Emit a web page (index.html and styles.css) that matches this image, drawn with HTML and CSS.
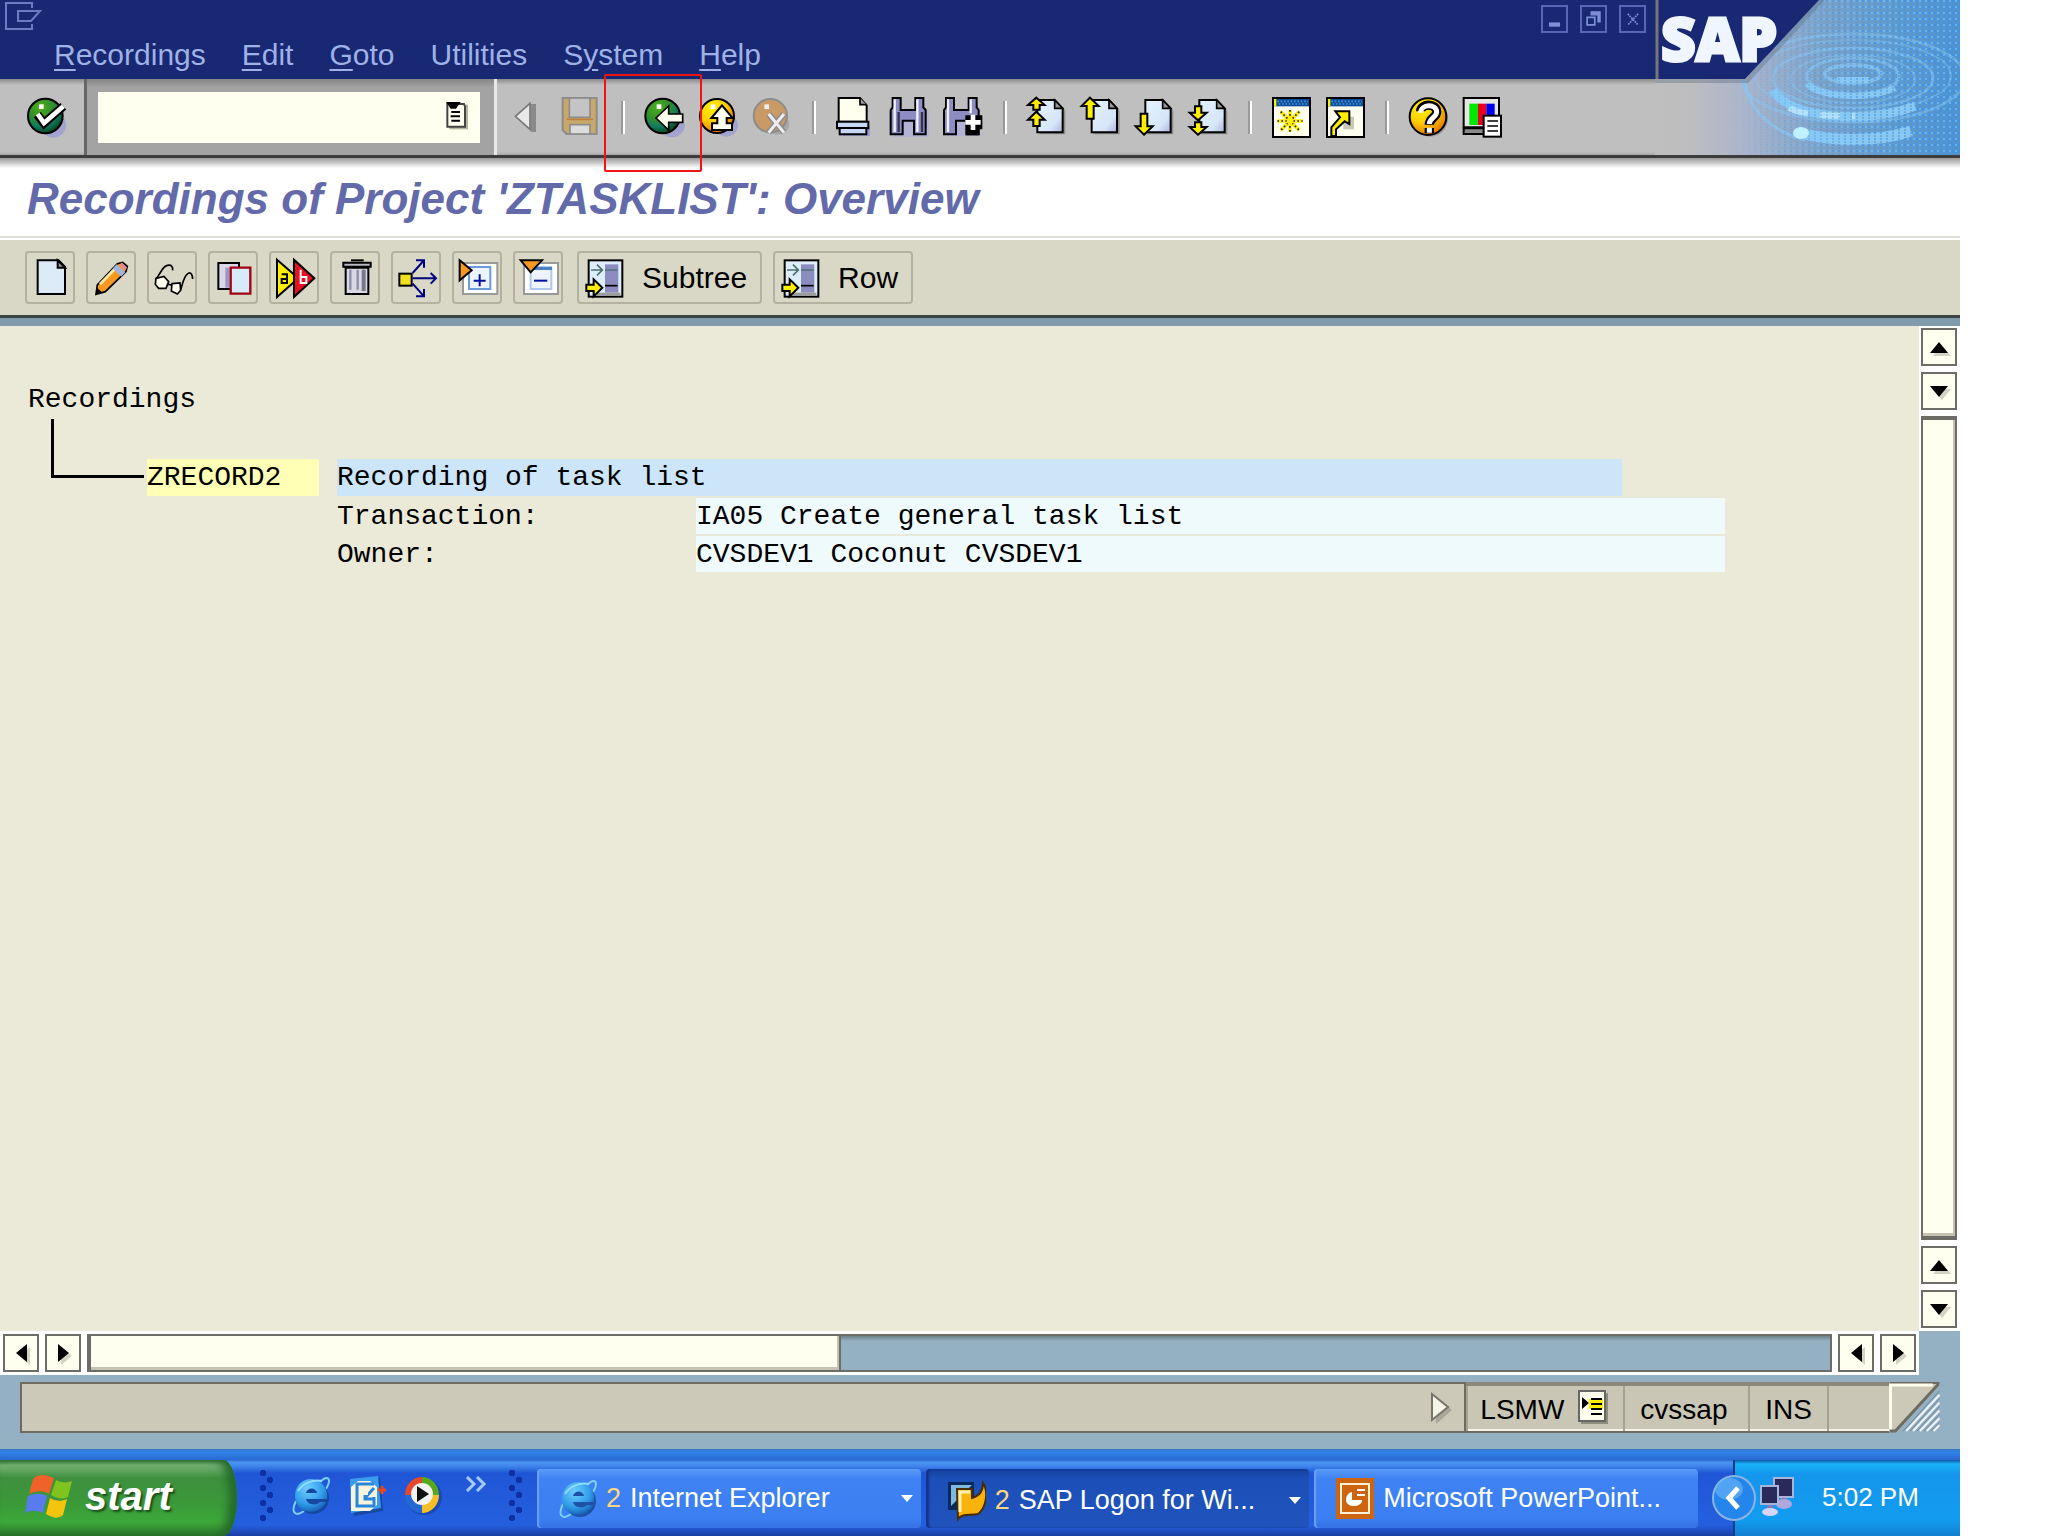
FILE: index.html
```
<!DOCTYPE html>
<html lang="en">
<head>
    <meta charset="UTF-8">
    <meta name="viewport" content="width=device-width, initial-scale=1.0">
    <title>Recordings of Project 'ZTASKLIST': Overview</title>
    <link rel="stylesheet" href="styles.css">
</head>
<body>
    <!-- shared gradients and shapes -->
    <svg class="defs" aria-hidden="true">
        <defs>
            <radialGradient id="green" cx="0.35" cy="0.25" r="0.8">
                <stop offset="0" stop-color="#4fae1c"/>
                <stop offset="0.45" stop-color="#2f8f2a"/>
                <stop offset="0.7" stop-color="#117a63"/>
                <stop offset="1" stop-color="#063f10"/>
            </radialGradient>
            <radialGradient id="gold" cx="0.35" cy="0.25" r="0.8">
                <stop offset="0" stop-color="#fff200"/>
                <stop offset="0.5" stop-color="#ffd000"/>
                <stop offset="1" stop-color="#e07000"/>
            </radialGradient>
            <linearGradient id="glass" x2="1" y2="1">
                <stop offset="0" stop-color="#e3f3ff"/>
                <stop offset="0.7" stop-color="#d6e6f8"/>
                <stop offset="1" stop-color="#aeb2dc"/>
            </linearGradient>
            <radialGradient id="ieblue" cx="0.4" cy="0.3" r="0.8">
                <stop offset="0" stop-color="#6fd0ff"/>
                <stop offset="0.6" stop-color="#2f9ae8"/>
                <stop offset="1" stop-color="#0f4fa8"/>
            </radialGradient>
            <g id="page">
                <path d="M6 306H56L84 332V403H6Z" fill="#8f8f8f"/>
                <path d="M0 300H52L76 325V397H0Z" fill="url(#glass)" stroke="#000" stroke-width="6"/>
                <path d="M52 300V325H76Z" fill="#9a9a9a" stroke="#000" stroke-width="5"/>
            </g>
            <g id="window">
                <rect x="3" y="294" width="111" height="117" fill="#fffff0" stroke="#000" stroke-width="6"/>
                <rect x="6" y="297" width="105" height="22" fill="#0a4f9c"/>
                <rect x="6" y="297" width="7" height="22" fill="#f4f000"/>
                <path d="M16 304H108M20 312H108" stroke="#4f8fd0" stroke-width="5" stroke-dasharray="5 5"/>
            </g>
            <g id="ie">
                <path d="M28 7C36 -1 40 4 34 14" fill="none" stroke="#7ccff8" stroke-width="2"/>
                <path d="M4 26C-2 38 4 42 12 36" fill="none" stroke="#7ccff8" stroke-width="2"/>
                <circle cx="21" cy="23" r="16" fill="#123f86" opacity="0.7"/>
                <path d="M19 4A16 17 0 0 1 35 24H14C15 30 25 31 28 27H34C29 41 3 41 3 21C3 11 10 4 19 4ZM14 18H25C24 12 15 12 14 18Z" fill="url(#ieblue)" fill-rule="evenodd"/>
                <path d="M6 16C10 9 20 4 30 6" fill="none" stroke="#8fdcff" stroke-width="2"/>
            </g>
            <g id="layout">
                <rect x="35" y="25" width="101" height="109" fill="#ddeefa" stroke="#000" stroke-width="6"/>
                <rect x="84" y="37" width="40" height="85" fill="#8d8cc0"/>
                <path d="M84 101H122" stroke="#000" stroke-width="5"/>
                <path d="M84 54H122M42 54H76M60 38L76 54L60 70" stroke="#4d7070" stroke-width="5" fill="none"/>
                <path d="M60 122H130V131H60Z" fill="#9c9c9c"/>
                <path d="M28 98H50V82L76 107L50 133V117H28Z" fill="#ffee00" stroke="#000" stroke-width="6"/>
            </g>
        </defs>
    </svg>

    <div class="window">
        <header class="header">
            <div class="header-main">
                <div class="titlebar">
                    <div class="caption">
                        <svg class="sysmenu" viewBox="0 0 40 32"><path d="M27 8V3H1V29H27V24M13 11H35L26 21H13Z" fill="none" stroke="#6b7cc4" stroke-width="2"/></svg>
                        <div class="controls">
                            <button class="ctl" aria-label="Minimize"><svg viewBox="0 0 27 28"><rect x="7" y="18" width="13" height="5" fill="#7d8fd6"/></svg></button>
                            <button class="ctl" aria-label="Restore"><svg viewBox="0 0 27 28"><path d="M10 5H22V18H18V10H10Z" fill="#7d8fd6"/><path d="M6 12H15V21H6Z" fill="none" stroke="#7d8fd6" stroke-width="2"/></svg></button>
                            <button class="ctl" aria-label="Close"><svg viewBox="0 0 27 28"><path d="M8 8L20 21M20 8L8 21" stroke="#7d8fd6" stroke-width="2" stroke-dasharray="2 1"/></svg></button>
                        </div>
                    </div>
                    <nav class="menu">
                        <button><u>R</u>ecordings</button>
                        <button><u>E</u>dit</button>
                        <button><u>G</u>oto</button>
                        <button>Utilities</button>
                        <button>S<u>y</u>stem</button>
                        <button><u>H</u>elp</button>
                    </nav>
                </div>
                <div class="toolbar">
                    <button class="enter" aria-label="Enter">
                        <svg viewBox="75 279 132 144">
                            <ellipse cx="160" cy="375" rx="38" ry="38" fill="#a3a3cf"/>
                            <circle cx="136" cy="348" r="52" fill="url(#green)" stroke="#000" stroke-width="6"/>
                            <rect x="117" y="313" width="14" height="14" fill="#fff"/>
                            <path d="M112 344L132 370L190 319" fill="none" stroke="#000" stroke-width="26"/>
                            <path d="M113 342L132 369L190 319" fill="none" stroke="#fff" stroke-width="14"/>
                        </svg>
                    </button>
                    <div class="command">
                        <input type="text" aria-label="Command field">
                        <button class="history" aria-label="Command history">
                            <svg viewBox="0 0 66 84">
                                <path d="M10 8H66V82H10Z" fill="#b5b5a0"/>
                                <path d="M4 6H54L57 14V74H4Z" fill="#fffff0" stroke="#444" stroke-width="6"/>
                                <path d="M0 0H44L30 20H14Z" fill="#000"/>
                                <path d="M16 30H42M14 43H42M16 56H42" stroke="#000" stroke-width="6"/>
                            </svg>
                        </button>
                    </div>
                    <div class="tools">
                        <button aria-label="Collapse"><svg viewBox="0 279 162 144">
                            <path d="M92 312V396H108V312Z" fill="#8a8a8a"/>
                            <path d="M46 349L90 310V388Z" fill="#e8e8e8" stroke="#777" stroke-width="5"/>
                        </svg></button>
                        <button aria-label="Save"><svg viewBox="162 279 162 144">
                            <path d="M188 294H290V402H200L188 390Z" fill="#c9a86a" stroke="#8c8c8c" stroke-width="6"/>
                            <rect x="208" y="294" width="62" height="58" fill="#c4c4c4" stroke="#8c8c8c" stroke-width="5"/>
                            <rect x="210" y="374" width="60" height="28" fill="#dcdcdc" stroke="#8c8c8c" stroke-width="5"/>
                            <path d="M200 358H280" stroke="#c08040" stroke-width="5"/>
                        </svg></button>
                        <span class="sep"></span>
                        <button aria-label="Back"><svg viewBox="411 279 162 144">
                            <ellipse cx="516" cy="376" rx="38" ry="36" fill="#a3a3cf"/>
                            <circle cx="488" cy="348" r="52" fill="url(#green)" stroke="#000" stroke-width="6"/>
                            <rect x="470" y="313" width="14" height="14" fill="#fff"/>
                            <path d="M468 354L506 318V342H548V367H506V390Z" fill="#fffff0" stroke="#000" stroke-width="5"/>
                        </svg></button>
                        <button aria-label="Exit"><svg viewBox="573 279 162 144">
                            <ellipse cx="678" cy="376" rx="36" ry="34" fill="#a3a3cf"/>
                            <circle cx="651" cy="348" r="51" fill="url(#gold)" stroke="#000" stroke-width="6"/>
                            <rect x="632" y="313" width="14" height="14" fill="#fff"/>
                            <path d="M666 316L698 354H680V370H696V390H636V370H652V354H634Z" fill="#fffff0" stroke="#000" stroke-width="6"/>
                        </svg></button>
                        <button aria-label="Cancel"><svg viewBox="735 279 162 144">
                            <ellipse cx="832" cy="372" rx="36" ry="32" fill="#a9a9a9"/>
                            <circle cx="811" cy="347" r="50" fill="#c99966" stroke="#8c8c8c" stroke-width="6"/>
                            <rect x="793" y="313" width="14" height="14" fill="#eee"/>
                            <path d="M806 342L852 398M852 342L806 398" stroke="#8c8c8c" stroke-width="18"/>
                            <path d="M806 342L852 398M852 342L806 398" stroke="#eee" stroke-width="9"/>
                        </svg></button>
                        <span class="sep"></span>
                        <button aria-label="Print"><svg viewBox="984 279 162 144">
                            <path d="M1018 380H1110V408H1018Z" fill="#9a9ad0"/>
                            <path d="M1016 294H1080L1100 316V365H1016Z" fill="#fffff0" stroke="#000" stroke-width="6"/>
                            <path d="M1080 294V314H1100" fill="#999" stroke="#000" stroke-width="5"/>
                            <path d="M1011 365H1105V385H1099V403H1019V385H1011Z" fill="#c8d8f4" stroke="#000" stroke-width="6"/>
                            <path d="M1014 384H1102" stroke="#000" stroke-width="6"/>
                        </svg></button>
                        <button aria-label="Find"><svg viewBox="1146 279 162 144">
                            <path d="M1180 330H1286V411H1180Z" fill="#b3b3d6"/>
                            <path d="M1178 294H1202V330H1246V294H1270V322L1277 330V403H1242V362H1208V403H1172V330L1178 322Z" fill="#8d8dc4" stroke="#000" stroke-width="6"/>
                            <path d="M1184 298V396M1252 298V396" stroke="#f2f2ff" stroke-width="7"/>
                            <path d="M1196 336V396M1266 336V396" stroke="#33334f" stroke-width="7"/>
                        </svg></button>
                        <button aria-label="Find next"><svg viewBox="1308 279 162 144">
                            <path d="M1340 330H1440V408H1340Z" fill="#b3b3d6"/>
                            <path d="M1338 294H1362V330H1406V294H1430V322L1436 330V403H1402V362H1368V403H1332V330L1338 322Z" fill="#8d8dc4" stroke="#000" stroke-width="6"/>
                            <path d="M1344 298V396M1412 298V340" stroke="#f2f2ff" stroke-width="7"/>
                            <path d="M1396 346H1447V388H1438V406H1396Z" fill="#000"/>
                            <path d="M1419 344V390M1396 367H1442" stroke="#fff" stroke-width="14"/>
                        </svg></button>
                        <span class="sep"></span>
                        <button aria-label="First page"><svg viewBox="57 279 162 144">
                            <use href="#page" x="112"/>
                            <path d="M109 293L134 315H119V329H100V315H84Z" fill="#ffee00" stroke="#000" stroke-width="6"/>
                            <path d="M109 335L134 359H119V378H100V359H84Z" fill="#ffee00" stroke="#000" stroke-width="6"/>
                        </svg></button>
                        <button aria-label="Previous page"><svg viewBox="219 279 162 144">
                            <use href="#page" x="275"/>
                            <path d="M270 293L296 318H281V356H260V318H245Z" fill="#ffee00" stroke="#000" stroke-width="6"/>
                        </svg></button>
                        <button aria-label="Next page"><svg viewBox="381 279 162 144">
                            <use href="#page" x="436"/>
                            <path d="M432 404L458 379H442V341H422V379H407Z" fill="#ffee00" stroke="#000" stroke-width="6"/>
                        </svg></button>
                        <button aria-label="Last page"><svg viewBox="543 279 162 144">
                            <use href="#page" x="598"/>
                            <path d="M594 361L620 338H604V319H585V338H569Z" fill="#ffee00" stroke="#000" stroke-width="6"/>
                            <path d="M594 404L620 381H604V367H585V381H569Z" fill="#ffee00" stroke="#000" stroke-width="6"/>
                        </svg></button>
                        <span class="sep"></span>
                        <button aria-label="New session"><svg viewBox="792 279 162 144">
                            <use href="#window" x="816"/>
                            <path d="M870 330V396M832 363H908M842 335L898 391M898 335L842 391" stroke="#ffee00" stroke-width="11"/>
                            <path d="M870 330V396M832 363H908M842 335L898 391M898 335L842 391" stroke="#222" stroke-width="5" stroke-dasharray="5 7"/>
                            <circle cx="870" cy="363" r="10" fill="#ffee00"/>
                        </svg></button>
                        <button aria-label="Create shortcut"><svg viewBox="954 279 162 144">
                            <use href="#window" x="978"/>
                            <path d="M1030 350H1062V388H1030Z" fill="#c9c9b5"/>
                            <path d="M994 408V382L1020 352L1006 334H1048V372L1034 364L1008 388V408Z" fill="#ffee00" stroke="#000" stroke-width="6"/>
                        </svg></button>
                        <span class="sep"></span>
                        <button aria-label="Help"><svg viewBox="1203 279 162 144">
                            <circle cx="1290" cy="356" r="54" fill="#999"/>
                            <circle cx="1284" cy="350" r="55" fill="url(#gold)" stroke="#000" stroke-width="6"/>
                            <path d="M1262 334C1262 310 1310 308 1310 336C1310 352 1288 354 1288 374M1288 384V400" fill="none" stroke="#000" stroke-width="28"/>
                            <path d="M1262 338C1262 312 1310 310 1310 336C1310 352 1288 354 1288 372M1288 383V398" fill="none" stroke="#fff" stroke-width="15"/>
                        </svg></button>
                        <button aria-label="Customize local layout"><svg viewBox="1365 279 162 144">
                            <path d="M1391 294H1497V382H1391Z" fill="#e6e6e6" stroke="#000" stroke-width="6"/>
                            <path d="M1391 385H1460V402H1391Z" fill="#8a8a8a" stroke="#000" stroke-width="6"/>
                            <rect x="1408" y="311" width="26" height="64" fill="#00e800"/>
                            <rect x="1434" y="311" width="25" height="64" fill="#e80020"/>
                            <rect x="1459" y="311" width="25" height="64" fill="#0000f0"/>
                            <rect x="1451" y="347" width="52" height="63" fill="#fff" stroke="#000" stroke-width="6"/>
                            <path d="M1462 363H1494M1462 378H1494M1462 393H1494" stroke="#000" stroke-width="5"/>
                        </svg></button>
                        <div class="marker"></div>
                    </div>
                </div>
            </div>
            <svg class="brand" viewBox="0 0 305 155" role="img" aria-label="SAP">
                <defs>
                    <linearGradient id="water">
                        <stop offset="0" stop-color="#bfbfbf"/>
                        <stop offset="0.12" stop-color="#bdbdc0"/>
                        <stop offset="0.3" stop-color="#aab4cc"/>
                        <stop offset="0.55" stop-color="#7aa3cc"/>
                        <stop offset="0.8" stop-color="#5a9bd4"/>
                        <stop offset="1" stop-color="#4894d8"/>
                    </linearGradient>
                    <pattern id="dither" width="6" height="6" patternUnits="userSpaceOnUse">
                        <rect width="2" height="2" fill="#8cc8f0"/>
                        <rect x="3" y="3" width="2" height="2" fill="#6a8fa8"/>
                        <rect x="3" width="2" height="2" fill="#3f8fe0"/>
                    </pattern>
                    <linearGradient id="fade">
                        <stop offset="0.25" stop-color="#000"/>
                        <stop offset="0.7" stop-color="#fff"/>
                    </linearGradient>
                    <mask id="fademask"><rect width="305" height="155" fill="url(#fade)"/></mask>
                </defs>
                <rect width="305" height="155" fill="url(#water)"/>
                <g fill="none" stroke="#86c8f6">
                    <ellipse cx="198" cy="78" rx="112" ry="44" stroke-width="3" opacity="0.5"/>
                    <ellipse cx="198" cy="76" rx="98" ry="36" stroke-width="2" opacity="0.4"/>
                    <ellipse cx="198" cy="78" rx="80" ry="30" stroke-width="3" opacity="0.5"/>
                    <ellipse cx="198" cy="79" rx="62" ry="24" stroke-width="2" opacity="0.4"/>
                    <ellipse cx="198" cy="76" rx="46" ry="18" stroke-width="3" opacity="0.6"/>
                    <ellipse cx="198" cy="74" rx="28" ry="9" stroke-width="4" opacity="0.7"/>
                    <path d="M182 80H214" stroke-width="6"/>
                    <path d="M152 84C165 98 215 100 240 88" stroke-width="6"/>
                    <path d="M118 90C135 120 215 124 260 106" stroke-width="9"/>
                    <path d="M142 132C175 142 225 142 256 131" stroke-width="11"/>
                    <path d="M90 80C92 110 118 132 150 140" stroke-width="3" opacity="0.7"/>
                </g>
                <path d="M134 108C150 116 175 116 200 116" fill="none" stroke="#b4e2ff" stroke-width="6" stroke-dasharray="20 12"/>
                <rect width="305" height="155" fill="url(#dither)" mask="url(#fademask)" opacity="0.5"/>
                <ellipse cx="146" cy="133" rx="8" ry="6" fill="#c0f0ff"/>
                <path d="M0 79H90L164 0H170L93 83H0Z" fill="#5f6f80" opacity="0.4"/>
                <path d="M0 0H164L90 79H0Z" fill="#182873"/>
                <path d="M2 0V79" stroke="#777" stroke-width="3"/>
                <text class="brand-text" x="6" y="61">SAP</text>
            </svg>
        </header>

        <h1 class="title">Recordings of Project 'ZTASKLIST': Overview</h1>

        <div class="appbar">
            <div class="appbar-group">
                <button class="appbtn" aria-label="Create"><svg viewBox="75 753 150 156">
                    <path d="M113 778H176L195 798V879H113Z" fill="#ddebf8" stroke="#000" stroke-width="6"/>
                    <path d="M173 778V800H195Z" fill="#999" stroke="#000" stroke-width="6"/>
                </svg></button>
                <button class="appbtn" aria-label="Edit"><svg viewBox="258 753 150 156">
                    <path d="M288 880L292 852L352 788L368 784L382 796L378 812L316 872Z" fill="#f89820" stroke="#000" stroke-width="5"/>
                    <path d="M300 850L350 798" stroke="#ffe8a0" stroke-width="9"/>
                    <path d="M344 796L370 820" stroke="#9fb4e0" stroke-width="18"/>
                    <path d="M362 788L378 804" stroke="#e88890" stroke-width="10"/>
                    <path d="M288 880L291 860L306 874Z" fill="#000"/>
                </svg></button>
                <button class="appbtn" aria-label="Display"><svg viewBox="441 753 150 156">
                    <path d="M518 808C520 786 496 788 484 810L466 838M578 834C576 806 560 812 550 840L542 866M504 850L516 852" fill="none" stroke="#000" stroke-width="5"/>
                    <path d="M468 832L492 826L506 842L498 862H476L466 850ZM516 848L540 846L542 868L532 879L514 870Z" fill="#fffff0" stroke="#000" stroke-width="5"/>
                </svg></button>
                <button class="appbtn" aria-label="Copy"><svg viewBox="626 753 150 156">
                    <path d="M657 786H719V864H657Z" fill="#d8d8e8" stroke="#000" stroke-width="6"/>
                    <path d="M684 800V860" stroke="#9a98c0" stroke-width="12"/>
                    <path d="M694 800H753V878H694Z" fill="#d6eafa" stroke="#a00010" stroke-width="7"/>
                </svg></button>
                <button class="appbtn" aria-label="Rename"><svg viewBox="810 753 150 156">
                    <path d="M834 776L898 832L834 888Z" fill="#ffee00" stroke="#000" stroke-width="6"/>
                    <path d="M885 776L946 832L885 888Z" fill="#e81020" stroke="#000" stroke-width="6"/>
                    <path d="M848 820H864V846H848V834H864" fill="none" stroke="#000" stroke-width="6"/>
                    <path d="M905 806V846H922V828H906" fill="none" stroke="#fff" stroke-width="6"/>
                </svg></button>
                <button class="appbtn" aria-label="Delete"><svg viewBox="993 753 150 156">
                    <path d="M1040 800H1108V879H1040Z" fill="#d8d8e4" stroke="#000" stroke-width="6"/>
                    <path d="M1054 806V866M1076 806V866" stroke="#8e8ea6" stroke-width="7"/>
                    <path d="M1094 806V870" stroke="#77778c" stroke-width="12"/>
                    <path d="M1033 785H1115V797H1033Z" fill="#b9b9c4" stroke="#000" stroke-width="6"/>
                    <path d="M1056 778H1094" stroke="#000" stroke-width="6"/>
                </svg></button>
                <button class="appbtn" aria-label="Distribute"><svg viewBox="1177 753 150 156">
                    <path d="M1242 816L1274 780M1252 778H1276V800M1242 848L1274 884M1252 886H1276V864M1242 832H1310M1296 816L1312 832L1296 848" fill="none" stroke="#000080" stroke-width="6"/>
                    <rect x="1202" y="818" width="37" height="36" fill="#f0e020" stroke="#000" stroke-width="6"/>
                </svg></button>
                <button class="appbtn" aria-label="Expand"><svg viewBox="1361 753 150 156">
                    <path d="M1394 786H1497V879H1394Z" fill="#fff" stroke="#999" stroke-width="6"/>
                    <rect x="1412" y="798" width="64" height="66" fill="#eef4ff" stroke="#6a9ad8" stroke-width="6"/>
                    <path d="M1444 820V856M1426 839H1462" stroke="#0010a0" stroke-width="6"/>
                    <path d="M1384 778L1420 808L1384 838Z" fill="#f89820" stroke="#000" stroke-width="6"/>
                </svg></button>
                <button class="appbtn" aria-label="Compress"><svg viewBox="45 753 150 156">
                    <path d="M78 786H180V879H78Z" fill="#fff" stroke="#999" stroke-width="6"/>
                    <rect x="98" y="800" width="62" height="64" fill="#eef4ff" stroke="#b0c8ee" stroke-width="6"/>
                    <path d="M98 802H162" stroke="#4a80c8" stroke-width="10"/>
                    <path d="M108 839H148" stroke="#0010a0" stroke-width="6"/>
                    <path d="M68 778H132L98 814Z" fill="#f89820" stroke="#000" stroke-width="6"/>
                </svg></button>
            </div>
            <div class="appbar-group">
                <button class="appbtn wide"><svg viewBox="0 0 150 156"><use href="#layout"/></svg>Subtree</button>
                <button class="appbtn wide"><svg viewBox="0 0 150 156"><use href="#layout"/></svg>Row</button>
            </div>
        </div>

        <main class="work">
            <div class="pane">
                <div class="tree">
                    <div class="root">Recordings</div>
                    <div class="node">
                        <div class="branch"></div>
                        <div class="name">ZRECORD2</div>
                        <div class="details">
                            <div class="desc">Recording of task list</div>
                            <dl>
                                <dt>Transaction:</dt>
                                <dd>IA05 Create general task list</dd>
                                <dt>Owner:</dt>
                                <dd>CVSDEV1 Coconut CVSDEV1</dd>
                            </dl>
                        </div>
                    </div>
                </div>
                <div class="hscroll">
                    <button aria-label="Scroll left"><span class="tri left"></span></button>
                    <button aria-label="Scroll right"><span class="tri right"></span></button>
                    <div class="track"><div class="thumb"></div></div>
                    <button aria-label="Scroll left"><span class="tri left"></span></button>
                    <button aria-label="Scroll right"><span class="tri right"></span></button>
                </div>
            </div>
            <div class="side">
                <div class="vscroll">
                    <button aria-label="Scroll up"><span class="tri up"></span></button>
                    <button aria-label="Scroll down"><span class="tri down"></span></button>
                    <div class="track"><div class="thumb"></div></div>
                    <button aria-label="Scroll up"><span class="tri up"></span></button>
                    <button aria-label="Scroll down"><span class="tri down"></span></button>
                </div>
            </div>
        </main>

        <footer class="status">
            <div class="message">
                <svg viewBox="0 0 22 34"><path d="M6 6L22 19L6 33Z" fill="#a9a698"/><path d="M2 3L18 16L2 29Z" fill="#f6f4e6" stroke="#77756b" stroke-width="2"/></svg>
            </div>
            <div class="cells">
                <div class="cell system">LSMW
                    <svg class="note" viewBox="0 0 30 34">
                        <rect x="3" y="3" width="27" height="31" fill="#8f8d80"/>
                        <rect x="1" y="1" width="26" height="30" fill="#fffff0" stroke="#666" stroke-width="2"/>
                        <rect x="11" y="9" width="14" height="10" fill="#ffee00"/>
                        <path d="M4 7L11 13L4 19Z"/>
                        <path d="M13 9H24M13 14H24M13 19H24M13 24H24" stroke="#000" stroke-width="2"/>
                    </svg>
                </div>
                <div class="cell host">cvssap</div>
                <div class="cell">INS</div>
                <div class="cell empty"></div>
            </div>
            <svg class="corner" viewBox="0 0 51 52">
                <path d="M0 0H51L6 51H0Z" fill="#cdc9b9"/>
                <path d="M0 1H51" stroke="#6e6c60" stroke-width="2"/>
                <path d="M1 51V3H44" fill="none" stroke="#fffff0" stroke-width="3"/>
                <path d="M0 50H6L50 2" fill="none" stroke="#6e6c60" stroke-width="3"/>
                <path d="M17 50L51 13M24 50L51 21M31 50L51 29M38 50L51 37M45 50L51 44" stroke="#f0f5f8" stroke-width="2"/>
                <path d="M14 50L51 9M21 50L51 17M28 50L51 25M35 50L51 33M42 50L51 41" stroke="#6f8796" stroke-width="1"/>
            </svg>
        </footer>

        <div class="taskbar">
            <button class="start">
                <svg viewBox="0 0 48 46">
                    <path d="M8 5C14 -1 20 1 29 4L24 20C17 16 11 17 4 20Z" fill="#f0622a"/>
                    <path d="M31 6C36 9 42 9 47 7L43 23C37 26 31 24 26 21Z" fill="#7fc31c"/>
                    <path d="M3 22C10 19 16 19 22 22L18 39C12 36 6 36 0 39Z" fill="#5a7af0"/>
                    <path d="M25 24C30 27 36 28 42 25L38 41C32 46 26 43 21 40Z" fill="#f4c40e"/>
                </svg>
                start
            </button>
            <div class="quick">
                <span class="grip"></span>
                <button aria-label="Internet Explorer"><svg viewBox="0 0 38 42"><use href="#ie"/></svg></button>
                <button aria-label="Outlook Express"><svg viewBox="0 0 38 42">
                    <path d="M4 8L32 3L35 36L6 41Z" fill="#12408c" opacity="0.7"/>
                    <path d="M2 4L30 1L33 33L3 38Z" fill="#3a9cec"/>
                    <path d="M3 12L10 6H22L29 12V30L22 36H3Z" fill="#f6f4dc"/>
                    <path d="M26 9H9V31H26V22" fill="none" stroke="#2a86dc" stroke-width="3"/>
                    <path d="M26 13L17 23M17 16V24H25" fill="none" stroke="#2a86dc" stroke-width="3"/>
                    <path d="M12 12H20V20H12Z" fill="#f6f4dc"/>
                    <path d="M34 11V19M30 15H38" stroke="#e84a1c" stroke-width="3"/>
                </svg></button>
                <button aria-label="Media Player"><svg viewBox="0 0 38 42">
                    <circle cx="20" cy="22" r="18" fill="#12388c" opacity="0.5"/>
                    <path d="M18 20L1 20A17 18 0 0 1 18 2Z" fill="#e8482c"/>
                    <path d="M18 20L18 2A17 18 0 0 1 35 20Z" fill="#58a81e"/>
                    <path d="M18 20L35 20A17 18 0 0 1 18 38Z" fill="#f4be24"/>
                    <path d="M18 20L18 38A17 18 0 0 1 1 20Z" fill="#2468d4"/>
                    <circle cx="18" cy="19" r="11" fill="#f2f2f2"/>
                    <path d="M13 11L25 19L13 27Z" fill="#111"/>
                </svg></button>
                <button class="more" aria-label="More"><svg viewBox="0 0 22 16"><path d="M2 1L9 8L2 15M12 1L19 8L12 15" fill="none" stroke="#a6ccff" stroke-width="3"/></svg></button>
                <span class="grip"></span>
            </div>
            <div class="tasks">
                <button class="task">
                    <svg viewBox="0 0 38 42"><use href="#ie"/></svg>
                    <span class="count">2</span>
                    <span class="label">Internet Explorer</span>
                    <span class="drop"></span>
                </button>
                <button class="task active">
                    <svg viewBox="0 0 38 42">
                        <path d="M0 2H26V30H0Z" fill="#0a2a5c"/>
                        <path d="M3 5H24L3 26Z" fill="#7fb8e0"/>
                        <path d="M9 9H24V18C32 16 35 10 35 3C41 12 38 28 30 34C22 36 14 33 10 39Z" fill="#f8b40c" stroke="#4a2c00" stroke-width="2"/>
                        <path d="M12 32V12H22" fill="none" stroke="#fff2b0" stroke-width="3"/>
                    </svg>
                    <span class="count">2</span>
                    <span class="label">SAP Logon for Wi...</span>
                    <span class="drop"></span>
                </button>
                <button class="task">
                    <svg viewBox="0 0 38 42">
                        <rect width="38" height="41" fill="#cc6410"/>
                        <rect x="5" y="6" width="28" height="29" fill="none" stroke="#fff0d8" stroke-width="2"/>
                        <path d="M16 14V22H26C26 30 10 30 10 22C10 18 12 15 16 14Z" fill="#fff"/>
                        <path d="M21 12H29M21 17H29" stroke="#fff" stroke-width="2"/>
                    </svg>
                    <span class="label">Microsoft PowerPoint...</span>
                </button>
            </div>
            <div class="tray">
                <button class="expand" aria-label="Show hidden icons"><svg viewBox="0 0 46 48">
                    <ellipse cx="23" cy="24" rx="21" ry="22" fill="#2485ea" stroke="#8ab4e4" stroke-width="2"/>
                    <ellipse cx="18" cy="15" rx="14" ry="11" fill="#6fb8f8" opacity="0.6"/>
                    <path d="M27 14L18 24L27 34" fill="none" stroke="#fff" stroke-width="5"/>
                </svg></button>
                <svg class="net" viewBox="0 0 34 40">
                    <path d="M14 1H33V20H14Z" fill="#2a2a5a" stroke="#a8b4d8" stroke-width="2"/>
                    <path d="M20 21H27V26H20Z" fill="#8478c0"/>
                    <ellipse cx="24" cy="27" rx="8" ry="5" fill="#b0a8dc"/>
                    <path d="M1 9H18V27H1Z" fill="#2a2a5a" stroke="#a8b4d8" stroke-width="2"/>
                    <path d="M7 28H13V32H7Z" fill="#8478c0"/>
                    <ellipse cx="10" cy="35" rx="8" ry="4" fill="#d8d4f4"/>
                </svg>
                <span class="clock">5:02 PM</span>
            </div>
        </div>
    </div>
</body>
</html>
```

FILE: styles.css
```
* {
    box-sizing: border-box;
}

body {
    margin: 0;
    background-color: #fff;
    font-family: "Liberation Sans", Arial, sans-serif;
    font-size: 28px;
    color: #000;
}

button {
    font: inherit;
    color: inherit;
    background: none;
    border: none;
    padding: 0;
    cursor: pointer;
}

svg {
    display: block;
    flex: none;
}

.defs {
    position: absolute;
    width: 0;
    height: 0;
}

.window {
    display: flex;
    flex-direction: column;
    min-height: 100vh;
    margin-right: 88px;
}

/* header */
.header {
    display: flex;
    height: 158px;
    border-bottom: 3px solid #3c3c3c;
}

.header-main {
    flex: 1;
    display: flex;
    flex-direction: column;
}

.titlebar {
    height: 79px;
    background-color: #182873;
}

.caption {
    display: flex;
    justify-content: space-between;
    height: 36px;
    padding: 0 9px 0 5px;
}

.sysmenu {
    width: 40px;
    height: 32px;
}

.controls {
    display: flex;
    gap: 12px;
    padding-top: 5px;
}

.ctl {
    width: 27px;
    height: 28px;
    border: 2px solid #5567b5;
}

.ctl svg {
    width: 23px;
    height: 24px;
}

.menu {
    display: flex;
    gap: 36px;
    padding-left: 54px;
}

.menu button {
    font-size: 30px;
    line-height: 38px;
    color: #9fb2e6;
}

.menu u {
    text-underline-offset: 4px;
    text-decoration-thickness: 2px;
}

.toolbar {
    flex: 1;
    display: flex;
    background: linear-gradient(#8a8a8a, #bfbfbf 6px, #bfbfbf 73px, #a8a8a8);
}

.enter {
    width: 87px;
    padding-left: 25px;
    border-right: 3px solid #666;
}

.enter svg {
    width: 44px;
    height: 48px;
}

.command {
    display: flex;
    position: relative;
    width: 410px;
    padding: 13px 14px 12px 11px;
    background: linear-gradient(#858585, #a3a3a3 8px);
    border-right: 3px solid #e8e8e8;
}

.command input {
    flex: 1;
    min-width: 0;
    padding: 0 48px 0 8px;
    border: none;
    background-color: #ffffef;
    font-size: 28px;
}

.history {
    position: absolute;
    right: 26px;
    top: 23px;
}

.history svg {
    width: 22px;
    height: 28px;
}

.tools {
    display: flex;
    align-items: center;
    position: relative;
    padding-left: 3px;
}

.tools svg {
    width: 54px;
    height: 48px;
}

.sep {
    width: 4px;
    height: 33px;
    margin: 0 12px 0 13px;
    border-left: 2px solid #999;
    border-right: 2px solid #fff;
}

/* red frame around the Back button */
.marker {
    position: absolute;
    left: 107px;
    top: -5px;
    width: 98px;
    height: 98px;
    border: 2px solid #f01414;
    border-radius: 2px;
    pointer-events: none;
}

.brand {
    width: 305px;
    height: 155px;
}

.brand-text {
    font-family: "Open Sans", "Liberation Sans", sans-serif;
    font-size: 60px;
    font-weight: 800;
    fill: #f0f6ff;
    stroke: #f0f6ff;
    stroke-width: 3px;
}

.title {
    margin: 0;
    padding: 15px 27px 11px;
    background: linear-gradient(#999, #fff 10px);
    border-bottom: 2px solid #ddddd5;
    font-size: 44px;
    font-style: italic;
    font-weight: bold;
    line-height: 52px;
    color: #626aaa;
}

/* application toolbar */
.appbar {
    display: flex;
    gap: 14px;
    padding: 11px 25px;
    background-color: #d9d8c6;
    border-top: 2px solid #fff;
    border-bottom: 3px solid #3c4444;
}

.appbar-group {
    display: flex;
    gap: 11px;
}

.appbtn {
    width: 50px;
    height: 53px;
    border: 2px solid #b3b1a0;
    border-radius: 4px;
}

.appbtn svg {
    width: 50px;
    height: 52px;
    margin: -2px;
}

.appbtn.wide {
    display: flex;
    align-items: center;
    gap: 17px;
    width: auto;
    padding-right: 13px;
    font-size: 30px;
}

/* work area */
.work {
    flex: 1;
    display: flex;
    background-color: #94b1c3;
    border-top: 8px solid #809cac;
}

.pane {
    flex: 1;
    display: flex;
    flex-direction: column;
}

.tree {
    flex: 1;
    padding: 55px 28px;
    background-color: #ebead9;
    font-family: "Liberation Mono", "Courier New", monospace;
    font-size: 28px;
    line-height: 38px;
}

.node {
    display: flex;
}

.branch {
    width: 93px;
    height: 59px;
    margin: 0 3px 0 23px;
    border-left: 3px solid #000;
    border-bottom: 3px solid #000;
}

.name,
.details {
    margin-top: 40px;
}

.name {
    align-self: flex-start;
    width: 172px;
    height: 37px;
    background-color: #ffffb5;
}

.details {
    margin-left: 18px;
}

.desc {
    width: 1285px;
    height: 37px;
    margin-bottom: 2px;
    background-color: #cde5f8;
}

dl {
    display: grid;
    grid-template-columns: 359px 1029px;
    row-gap: 2px;
    margin: 0;
}

dt,
dd {
    height: 36px;
    margin: 0;
}

dd {
    background-color: #eefafc;
}

/* scrollbars */
.hscroll,
.vscroll {
    display: flex;
    gap: 6px;
    background-color: #fff;
}

.hscroll {
    height: 44px;
    padding: 3px;
}

.vscroll {
    flex-direction: column;
    flex: 1;
    padding: 2px 3px 3px 2px;
}

.side {
    display: flex;
    flex-direction: column;
    width: 41px;
    padding-bottom: 44px;
}

.hscroll button,
.vscroll button {
    display: flex;
    align-items: center;
    justify-content: center;
    flex: none;
    width: 36px;
    height: 38px;
    background-color: #ffffef;
    border: 2px solid #6e6c66;
}

.track {
    flex: 1;
    display: flex;
    background: linear-gradient(#6d8288, #94b1c3 5px);
    border: 2px solid #6e6c66;
}

.hscroll .track {
    border-left-width: 4px;
}

.vscroll .track {
    border-top-width: 4px;
    border-bottom-width: 4px;
}

.thumb {
    background-color: #ffffef;
    border-right: 2px solid #c5c3b0;
    border-bottom: 3px solid #c5c3b0;
}

.hscroll .thumb {
    width: 43%;
    box-shadow: 2px 0 0 #6e6c66;
}

.vscroll .thumb {
    flex: 1;
}

.tri {
    border: 9px solid transparent;
    filter: drop-shadow(3px 3px 0 #d4d2c2);
}

.tri.up {
    border-top: none;
    border-bottom: 11px solid #000;
}

.tri.down {
    border-bottom: none;
    border-top: 11px solid #000;
}

.tri.left {
    border-left: none;
    border-right: 11px solid #000;
}

.tri.right {
    border-right: none;
    border-left: 11px solid #000;
}

/* status bar */
.status {
    display: flex;
    padding: 7px 20px 16px;
    background-color: #94b1c3;
}

.message {
    flex: 1;
    display: flex;
    align-items: center;
    justify-content: flex-end;
    height: 51px;
    padding-right: 12px;
    background-color: #cdc9b9;
    border: 2px solid #6e6c60;
}

.message svg {
    width: 22px;
    height: 34px;
}

.cells {
    display: flex;
    background-color: #c9c6b6;
    border-top: 4px solid #8a887a;
    border-bottom: 2px solid #6e6c60;
    box-shadow: inset 0 -2px 0 #f6f4e6;
}

.cell {
    display: flex;
    align-items: center;
    padding: 2px 15px 0;
    border-right: 2px solid #a5a293;
}

.cell.system {
    gap: 14px;
    width: 159px;
    padding-left: 12px;
    border-left: 2px solid #a5a293;
}

.cell .note {
    width: 30px;
    height: 34px;
    margin-top: -6px;
}

.cell.host {
    width: 125px;
}

.cell.empty {
    width: 60px;
    border-right: none;
}

.corner {
    width: 51px;
    height: 51px;
}

/* taskbar */
.taskbar {
    display: flex;
    height: 87px;
    padding-top: 11px;
    background: linear-gradient(#3a76bc, #2f83ea 3px, #2b68d2 11px, #4a94f0 13px, #3f86ec 17px, #2056d6 24px, #2460de 76px, #1a3ea4);
    color: #fff;
}

.start {
    display: flex;
    align-items: center;
    gap: 12px;
    width: 237px;
    padding: 0 0 3px 25px;
    border-radius: 0 14px 14px 0 / 0 40px 40px 0;
    background: linear-gradient(#3a7a3a, #79b579 5px, #3f8f3f 18px, #3a9a38 45px, #3da83a 62px, #2c7a2c);
    box-shadow: inset -8px 0 10px #24692a;
    font-size: 40px;
    font-weight: bold;
    font-style: italic;
    text-shadow: 2px 2px 2px #1d4f1d;
}

.start svg {
    width: 48px;
    height: 46px;
}

.quick {
    display: flex;
    align-items: center;
    gap: 18px;
    width: 300px;
    padding: 0 14px 4px 23px;
}

.quick svg {
    width: 38px;
    height: 42px;
}

.quick .more {
    margin: 0 auto 24px;
}

.quick .more svg {
    width: 22px;
    height: 16px;
}

.grip {
    flex: none;
    width: 14px;
    height: 52px;
    background:
        radial-gradient(circle at 3px 3px, #0f2fa4 3px, transparent 3px) 0 0 / 14px 15px,
        radial-gradient(circle at 10px 10px, #0f2fa4 3px, transparent 3px) 0 0 / 14px 15px;
}

.tasks {
    flex: 1;
    display: flex;
    gap: 5px;
    padding: 9px 35px 8px 0;
}

.task {
    flex: 1;
    display: flex;
    align-items: center;
    gap: 9px;
    min-width: 0;
    padding: 0 8px 0 22px;
    border-radius: 4px;
    background: linear-gradient(#5b9af8, #3f82f4 10px, #3c7ff2 50px, #3470e4);
    box-shadow: inset 2px 0 1px #6aa2fa;
    font-size: 27px;
    text-align: left;
}

.task.active {
    padding-top: 4px;
    background: linear-gradient(#123f9c, #1c50b8 10px, #2054bc);
    box-shadow: inset 3px 0 2px #12348c;
}

.task svg {
    width: 38px;
    height: 42px;
}

.count {
    color: #ffd580;
}

.label {
    flex: 1;
    white-space: nowrap;
}

.drop {
    border: 6px solid transparent;
    border-top: 7px solid #fff;
    border-bottom: none;
}

.tray {
    display: flex;
    align-items: center;
    position: relative;
    gap: 28px;
    width: 227px;
    padding: 0 0 2px 25px;
    background: linear-gradient(#1458a8, #18b4f8 4px, #1496ec 14px, #129cef 60px, #1280d0);
    border-left: 2px solid #123c88;
    font-size: 26px;
}

.expand {
    position: absolute;
    left: -24px;
    top: 14px;
}

.expand svg {
    width: 46px;
    height: 48px;
}

.net {
    width: 34px;
    height: 40px;
}
```
